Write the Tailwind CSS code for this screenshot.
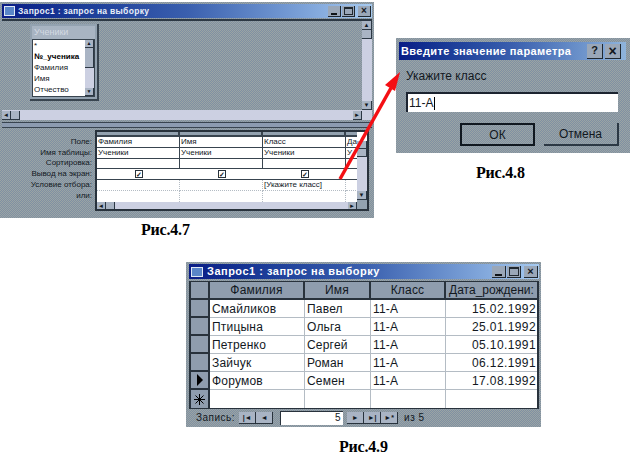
<!DOCTYPE html>
<html lang="en">
<head>
    <meta charset="UTF-8">
    <meta name="viewport" content="width=device-width, initial-scale=1.0">
    <title>Запрос1</title>
    <script src="https://cdn.jsdelivr.net/npm/@tailwindcss/browser@4"></script>
</head>
<body class="bg-white font-['Liberation_Sans',sans-serif] text-[#12181e]">
<div class="relative h-[468px] w-[630px] overflow-hidden">

    <!-- query window -->
    <div class="absolute left-0 top-[2px] flex h-[216px] w-[374px] flex-col bg-[repeating-conic-gradient(#7f90a3_0_25%,#9ba4a4_0_50%)] bg-[length:2px_2px] px-[2px] pt-[2px]">
        <div class="flex h-[14px] shrink-0 items-center bg-gradient-to-r from-[#0a1c86] via-[#3a5fae] to-[#a6caf0] pl-[2px] pr-[1px]">
            <div class="mr-[3px] h-[10px] w-[11px] border border-[#dfe8f4] bg-[#5a86c8]"></div>
            <span class="flex-1 text-[8.5px] leading-none font-bold tracking-[0.3px] text-[#e8eef8]">Запрос1 : запрос на выборку</span>
            <div class="flex gap-[1px]">
                <div class="flex h-[11px] w-[13px] items-end justify-center border-b border-r border-[#202830] bg-[#9aa7b8] pb-[1px]"><div class="h-[2px] w-[6px] bg-[#101418]"></div></div>
                <div class="mr-[2px] flex h-[11px] w-[13px] items-center justify-center border-b border-r border-[#202830] bg-[#9aa7b8]"><div class="h-[8px] w-[9px] border border-t-2 border-[#202830]"></div></div>
                <div class="flex h-[11px] w-[13px] items-center justify-center border-b border-r border-[#202830] bg-[#9aa7b8] text-[10px] leading-none font-bold">×</div>
            </div>
        </div>

        <!-- upper pane -->
        <div class="relative mt-[1px] flex h-[101px] shrink-0 flex-col border-t-2 border-[#2c3844]">
            <div class="flex min-h-0 flex-1">
                <div class="flex-1"></div>
                <div class="flex w-[10px] flex-col bg-[#ccd0e2]">
                    <div class="flex h-[9px] items-center justify-center border-b border-r border-[#2c3844] bg-[#a9b4c4] text-[6px] leading-none">▲</div>
                    <div class="h-[9px] border-b border-r border-[#2c3844] bg-[#a9b4c4]"></div>
                    <div class="flex-1"></div>
                    <div class="flex h-[9px] items-center justify-center border-b border-r border-[#2c3844] bg-[#a9b4c4] text-[6px] leading-none">▼</div>
                </div>
            </div>
            <div class="flex h-[10px] shrink-0 items-center bg-[#ccd0e2] pr-[10px]">
                <div class="flex h-[9px] w-[9px] items-center justify-center border-b border-r border-[#2c3844] bg-[#a9b4c4] text-[6px] leading-none">◄</div>
                <div class="h-[9px] w-[9px] border-b border-r border-[#2c3844] bg-[#a9b4c4]"></div>
                <div class="flex-1"></div>
                <div class="flex h-[9px] w-[9px] items-center justify-center border-b border-r border-[#2c3844] bg-[#a9b4c4] text-[6px] leading-none">►</div>
            </div>

            <!-- table box -->
            <div class="absolute left-[28px] top-[3px] flex h-[77px] w-[69px] flex-col border-r-2 border-b-2 border-[#38444f] bg-[#93a2b0] p-[2px]">
                <div class="flex h-[13px] shrink-0 items-center bg-[#a8b4c2] pl-[2px] text-[9px] leading-none text-[#d4dae2]">Ученики</div>
                <div class="flex min-h-0 flex-1 border border-[#38444f] bg-white">
                    <div class="flex-1 pl-[1px] text-[8px] leading-[11px]">
                        <div>*</div>
                        <div class="font-bold text-black">№_ученика</div>
                        <div>Фамилия</div>
                        <div>Имя</div>
                        <div>Отчество</div>
                    </div>
                    <div class="flex w-[9px] flex-col bg-[#ccd0e2]">
                        <div class="flex h-[8px] items-center justify-center border-b border-r border-[#2c3844] bg-[#a9b4c4] text-[5px] leading-none">▲</div>
                        <div class="h-[20px] border-b border-r border-[#2c3844] bg-[#a9b4c4]"></div>
                        <div class="flex-1"></div>
                        <div class="flex h-[8px] items-center justify-center border-b border-r border-[#2c3844] bg-[#a9b4c4] text-[5px] leading-none">▼</div>
                    </div>
                </div>
            </div>
        </div>

        <!-- splitter -->
        <div class="mt-[2px] h-[6px] shrink-0 border-y border-[#38444f] bg-[#8c9bb0]"></div>

        <!-- lower pane -->
        <div class="flex flex-1 items-start pt-[2px]">
            <div class="flex w-[93px] shrink-0 flex-col items-end pr-[3px] pt-[7px] text-right text-[8px] leading-[10.7px]">
                <div>Поле:</div>
                <div>Имя таблицы:</div>
                <div>Сортировка:</div>
                <div>Вывод на экран:</div>
                <div>Условие отбора:</div>
                <div>или:</div>
            </div>
            <div class="flex h-[81px] w-[274px] border-2 border-[#28323c] bg-white">
                <div class="min-w-0 flex-1 overflow-hidden">
                    <div class="grid h-[70px] grid-cols-[83px_83px_83px_20px] grid-rows-[5px_11px_11px_10px_11px_11px_11px] text-[8px] leading-[10px]">
                        <div class="border-r-2 border-b-2 border-[#38444f] bg-[#93a2b0]"></div>
                        <div class="border-r-2 border-b-2 border-[#38444f] bg-[#93a2b0]"></div>
                        <div class="border-r-2 border-b-2 border-[#38444f] bg-[#93a2b0]"></div>
                        <div class="border-b-2 border-[#38444f] bg-[#93a2b0]"></div>

                        <div class="border-r border-b border-[#38444f] pl-[1px]">Фамилия</div>
                        <div class="border-r border-b border-[#38444f] pl-[1px]">Имя</div>
                        <div class="border-r border-b border-[#38444f] pl-[1px]">Класс</div>
                        <div class="border-b border-[#38444f] pl-[1px]">Да</div>

                        <div class="border-r border-b border-[#38444f] pl-[1px]">Ученики</div>
                        <div class="border-r border-b border-[#38444f] pl-[1px]">Ученики</div>
                        <div class="border-r border-b border-[#38444f] pl-[1px]">Ученики</div>
                        <div class="border-b border-[#38444f] pl-[1px]">У</div>

                        <div class="border-r border-b border-[#38444f]"></div>
                        <div class="border-r border-b border-[#38444f]"></div>
                        <div class="border-r border-b border-[#38444f]"></div>
                        <div class="border-b border-[#38444f]"></div>

                        <div class="flex items-center justify-center border-b border-[#38444f]"><div class="flex h-[8px] w-[8px] items-center justify-center border border-[#28323c] text-[7px] leading-none font-bold">✓</div></div>
                        <div class="flex items-center justify-center border-b border-[#38444f]"><div class="flex h-[8px] w-[8px] items-center justify-center border border-[#28323c] text-[7px] leading-none font-bold">✓</div></div>
                        <div class="flex items-center justify-center border-b border-[#38444f]"><div class="flex h-[8px] w-[8px] items-center justify-center border border-[#28323c] text-[7px] leading-none font-bold">✓</div></div>
                        <div class="border-b border-[#38444f]"></div>

                        <div class="border-r border-b border-dotted border-[#b4bcc4]"></div>
                        <div class="border-r border-b border-dotted border-[#b4bcc4]"></div>
                        <div class="border-r border-b border-dotted border-[#b4bcc4] pl-[1px]">[Укажите класс]</div>
                        <div class="border-b border-dotted border-[#b4bcc4]"></div>

                        <div class="border-r border-dotted border-[#b4bcc4]"></div>
                        <div class="border-r border-dotted border-[#b4bcc4]"></div>
                        <div class="border-r border-dotted border-[#b4bcc4]"></div>
                        <div></div>
                    </div>
                    <div class="flex h-[9px] items-center bg-[#ccd0e2]">
                        <div class="flex h-[9px] w-[9px] items-center justify-center border-b border-r border-[#2c3844] bg-[#a9b4c4] text-[6px] leading-none">◄</div>
                        <div class="h-[9px] w-[9px] border-b border-r border-[#2c3844] bg-[#a9b4c4]"></div>
                        <div class="flex-1"></div>
                        <div class="flex h-[9px] w-[9px] items-center justify-center border-b border-r border-[#2c3844] bg-[#a9b4c4] text-[6px] leading-none">►</div>
                    </div>
                </div>
                <div class="flex w-[10px] shrink-0 flex-col bg-[#ccd0e2]">
                    <div class="h-[9px] bg-white"></div>
                    <div class="h-[8px] border-b border-r border-[#2c3844] bg-[#a9b4c4]"></div>
                    <div class="h-[8px] border-b border-r border-[#2c3844] bg-[#a9b4c4]"></div>
                    <div class="flex-1"></div>
                    <div class="flex h-[9px] items-center justify-center border-b border-r border-[#2c3844] bg-[#a9b4c4] text-[6px] leading-none">▼</div>
                    <div class="h-[9px] bg-[#93a2b0]"></div>
                </div>
            </div>
        </div>
    </div>
    <div class="absolute left-[141px] top-[222px] font-['Liberation_Serif',serif] text-[16px] leading-[15px] font-bold tracking-[-0.2px] text-black">Рис.4.7</div>

    <!-- parameter dialog -->
    <div class="absolute left-[396px] top-[38px] flex h-[115px] w-[234px] flex-col bg-[repeating-conic-gradient(#7f90a3_0_25%,#9ba4a4_0_50%)] bg-[length:2px_2px] pl-[3px] pr-[4px] pt-[4px]">
        <div class="flex h-[18px] shrink-0 items-center bg-gradient-to-r from-[#0a1c86] via-[#3a5fae] to-[#8fb4dc] pl-[2px]">
            <span class="flex-1 text-[11px] leading-none font-bold tracking-[0.4px] whitespace-nowrap text-white">Введите значение параметра</span>
            <div class="mr-[2px] flex h-[15px] w-[16px] items-center justify-center border-r border-b border-[#202830] bg-[#9aa7b8] text-[11px] leading-none font-bold">?</div>
            <div class="mr-[5px] flex h-[15px] w-[16px] items-center justify-center border-r border-b border-[#202830] bg-[#9aa7b8] text-[14px] leading-none font-bold">×</div>
        </div>
        <div class="mt-[9px] pl-[7px] text-[12px] leading-[14px]">Укажите класс</div>
        <div class="ml-[7px] mt-[9px] flex h-[20px] w-[212px] items-center border-t-2 border-l-2 border-[#1c2430] bg-white pl-[1px] text-[12px] leading-none">11-А<span class="ml-[1px] h-[13px] w-[1px] bg-black"></span></div>
        <div class="mt-[11px] flex gap-[9px] pl-[61px]">
            <div class="flex h-[23px] w-[75px] items-center justify-center border-2 border-[#101820] text-[12px]">ОК</div>
            <div class="flex h-[23px] w-[75px] items-center justify-center border-r-2 border-b-2 border-[#2c3844] text-[12px]">Отмена</div>
        </div>
    </div>
    <div class="absolute left-[476px] top-[165px] font-['Liberation_Serif',serif] text-[16px] leading-[15px] font-bold tracking-[-0.2px] text-black">Рис.4.8</div>

    <!-- arrow from the criteria cell to the prompt -->
    <svg class="absolute left-0 top-0" width="630" height="468" viewBox="0 0 630 468" fill="none">
        <path d="M340 179 L391 88" stroke="#f40f14" stroke-width="3.5"/>
        <path d="M400 72 L395 91 L385 85 Z" fill="#f40f14"/>
    </svg>

    <!-- result window -->
    <div class="absolute left-[186px] top-[262px] flex h-[165px] w-[355px] flex-col bg-[repeating-conic-gradient(#7f90a3_0_25%,#9ba4a4_0_50%)] bg-[length:2px_2px] pl-[3px] pr-[2px] pt-[2px]">
        <div class="flex h-[15px] shrink-0 items-center bg-gradient-to-r from-[#0a1c86] via-[#3a5fae] to-[#a6caf0] pl-[2px] pr-[1px]">
            <div class="mr-[4px] h-[10px] w-[12px] border border-[#dfe8f4] bg-[#5a86c8]"></div>
            <span class="flex-1 text-[11px] leading-none font-bold tracking-[0.5px] text-white">Запрос1 : запрос на выборку</span>
            <div class="flex gap-[1px]">
                <div class="flex h-[12px] w-[14px] items-end justify-center border-b border-r border-[#202830] bg-[#9aa7b8] pb-[1px]"><div class="h-[2px] w-[7px] bg-[#101418]"></div></div>
                <div class="mr-[2px] flex h-[12px] w-[14px] items-center justify-center border-b border-r border-[#202830] bg-[#9aa7b8]"><div class="h-[9px] w-[10px] border border-t-2 border-[#202830]"></div></div>
                <div class="flex h-[12px] w-[14px] items-center justify-center border-b border-r border-[#202830] bg-[#9aa7b8] text-[11px] leading-none font-bold">×</div>
            </div>
        </div>
        <div class="mt-[2px] grid grid-cols-[19px_95px_66px_75px_91px] grid-rows-[18px_repeat(6,18px)] border-t border-l-2 border-r-2 border-[#28323c] bg-white text-[12px] leading-none tracking-[0.2px]">
            <div class="border-r-2 border-b-2 border-[#28323c] bg-[#8f9dae]"></div>
            <div class="flex items-center justify-center border-r-2 border-b-2 border-[#28323c] bg-[#8f9dae]">Фамилия</div>
            <div class="flex items-center justify-center border-r-2 border-b-2 border-[#28323c] bg-[#8f9dae]">Имя</div>
            <div class="flex items-center justify-center border-r-2 border-b-2 border-[#28323c] bg-[#8f9dae]">Класс</div>
            <div class="flex items-center justify-center overflow-hidden border-b-2 border-[#28323c] bg-[#8f9dae] tracking-normal whitespace-nowrap">Дата_рождени:</div>

            <div class="border-r-2 border-b-2 border-[#28323c] bg-[#8f9dae]"></div>
            <div class="flex items-center border-r border-b border-[#b4bcc4] pl-[2px]">Смайликов</div>
            <div class="flex items-center border-r border-b border-[#b4bcc4] pl-[2px]">Павел</div>
            <div class="flex items-center border-r border-b border-[#b4bcc4] pl-[2px]">11-А</div>
            <div class="flex items-center justify-end border-b border-[#b4bcc4] pr-[1px] tracking-[0.4px]">15.02.1992</div>

            <div class="border-r-2 border-b-2 border-[#28323c] bg-[#8f9dae]"></div>
            <div class="flex items-center border-r border-b border-[#b4bcc4] pl-[2px]">Птицына</div>
            <div class="flex items-center border-r border-b border-[#b4bcc4] pl-[2px]">Ольга</div>
            <div class="flex items-center border-r border-b border-[#b4bcc4] pl-[2px]">11-А</div>
            <div class="flex items-center justify-end border-b border-[#b4bcc4] pr-[1px] tracking-[0.4px]">25.01.1992</div>

            <div class="border-r-2 border-b-2 border-[#28323c] bg-[#8f9dae]"></div>
            <div class="flex items-center border-r border-b border-[#b4bcc4] pl-[2px]">Петренко</div>
            <div class="flex items-center border-r border-b border-[#b4bcc4] pl-[2px]">Сергей</div>
            <div class="flex items-center border-r border-b border-[#b4bcc4] pl-[2px]">11-А</div>
            <div class="flex items-center justify-end border-b border-[#b4bcc4] pr-[1px] tracking-[0.4px]">05.10.1991</div>

            <div class="border-r-2 border-b-2 border-[#28323c] bg-[#8f9dae]"></div>
            <div class="flex items-center border-r border-b border-[#b4bcc4] pl-[2px]">Зайчук</div>
            <div class="flex items-center border-r border-b border-[#b4bcc4] pl-[2px]">Роман</div>
            <div class="flex items-center border-r border-b border-[#b4bcc4] pl-[2px]">11-А</div>
            <div class="flex items-center justify-end border-b border-[#b4bcc4] pr-[1px] tracking-[0.4px]">06.12.1991</div>

            <div class="flex items-center justify-center border-r-2 border-b-2 border-[#28323c] bg-[#8f9dae] text-black">
                <svg width="8" height="12" viewBox="0 0 8 12"><path d="M1 0 L7 6 L1 12 Z" fill="#000"/></svg>
            </div>
            <div class="flex items-center border-r border-b border-[#b4bcc4] pl-[2px]">Форумов</div>
            <div class="flex items-center border-r border-b border-[#b4bcc4] pl-[2px]">Семен</div>
            <div class="flex items-center border-r border-b border-[#b4bcc4] pl-[2px]">11-А</div>
            <div class="flex items-center justify-end border-b border-[#b4bcc4] pr-[1px] tracking-[0.4px]">17.08.1992</div>

            <div class="flex items-center justify-center border-r-2 border-[#28323c] bg-[#8f9dae] text-black">
                <svg width="11" height="11" viewBox="0 0 11 11" stroke="#000" stroke-width="1"><path d="M5.5 0 V11 M0 5.5 H11 M1.5 1.5 L9.5 9.5 M9.5 1.5 L1.5 9.5"/></svg>
            </div>
            <div class="border-r border-[#b4bcc4]"></div>
            <div class="border-r border-[#b4bcc4]"></div>
            <div class="border-r border-[#b4bcc4]"></div>
            <div></div>
        </div>
        <div class="flex h-[18px] shrink-0 items-center border-t border-[#28323c] pl-[7px] text-[10px] leading-none tracking-[0.5px]">
            <span class="mr-[4px]">Запись:</span>
            <div class="flex h-[12px] w-[17px] items-center justify-center border-r border-b border-[#28323c] bg-[#a9b4c4] text-[7px] font-bold tracking-normal">|◄</div>
            <div class="mr-[7px] flex h-[12px] w-[17px] items-center justify-center border-r border-b border-[#28323c] bg-[#a9b4c4] text-[7px] font-bold tracking-normal">◄</div>
            <div class="mr-[4px] flex h-[14px] w-[63px] items-center justify-end border-t border-l border-[#28323c] bg-white pr-[2px] text-[10px]">5</div>
            <div class="flex h-[12px] w-[17px] items-center justify-center border-r border-b border-[#28323c] bg-[#a9b4c4] text-[7px] font-bold tracking-normal">►</div>
            <div class="flex h-[12px] w-[17px] items-center justify-center border-r border-b border-[#28323c] bg-[#a9b4c4] text-[7px] font-bold tracking-normal">►|</div>
            <div class="mr-[6px] flex h-[12px] w-[17px] items-center justify-center border-r border-b border-[#28323c] bg-[#a9b4c4] text-[7px] font-bold tracking-normal">►*</div>
            <span>из 5</span>
        </div>
    </div>
    <div class="absolute left-[339px] top-[439px] font-['Liberation_Serif',serif] text-[16px] leading-[15px] font-bold tracking-[-0.2px] text-black">Рис.4.9</div>

</div>
</body>
</html>
